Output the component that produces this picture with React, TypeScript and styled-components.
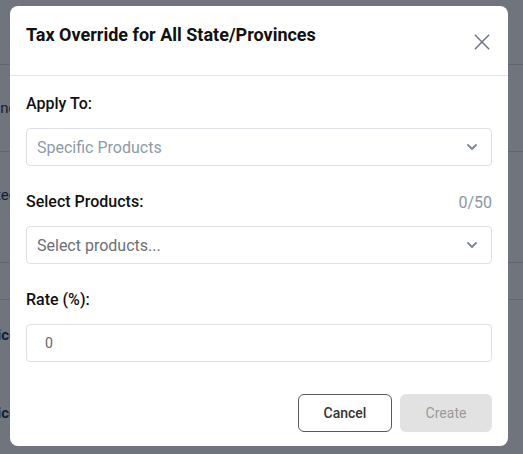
import * as React from "react";
import styled, { createGlobalStyle } from "styled-components";

const GlobalStyle = createGlobalStyle`
  html, body {
    margin: 0;
    padding: 0;
    background: #ffffff;
    font-family: Roboto, "Liberation Sans", Arial, sans-serif;
  }
  * { box-sizing: border-box; }
`;

const Page = styled.div`
  width: 523px;
  height: 454px;
  overflow: hidden;
  position: relative;
  background: #ffffff;
`;

const PageHeader = styled.div`
  height: 65px;
  border-bottom: 1px solid #d8dbe0;
`;

const PageRow = styled.div<{ $h: number; $lift?: number }>`
  height: ${(p) => p.$h}px;
  border-bottom: 1px solid #d8dbe0;
  display: flex;
  align-items: center;
  padding-bottom: ${(p) => p.$lift || 0}px;
  margin-left: -22px;
  font-size: 15px;
  color: #1f2937;
`;

const PageList = styled.div`
  display: flex;
  flex-direction: column;
  gap: 42px;
  padding: 26px 0 0 0;
  margin-left: -18px;
`;

const ListItem = styled.div`
  display: flex;
  flex-direction: column;
  gap: 4px;
`;

const ItemTitle = styled.div`
  font-size: 15px;
  font-weight: 700;
  color: #1f2937;
`;

const ItemSub = styled.div`
  font-size: 12px;
  color: #6b7280;
`;

const Overlay = styled.div`
  position: absolute;
  inset: 0;
  background: rgba(17, 24, 39, 0.6);
  padding: 6px 0 0 10px;
`;

const Dialog = styled.div`
  width: 498px;
  height: 440px;
  background: #ffffff;
  border-radius: 8px;
  display: flex;
  flex-direction: column;
`;

const Header = styled.div`
  height: 70px;
  border-bottom: 1px solid #e3e5e8;
  display: flex;
  align-items: flex-start;
  justify-content: space-between;
  padding: 17px 14px 0 16px;
`;

const Title = styled.h2`
  margin: 0;
  font-size: 18px;
  line-height: 24px;
  font-weight: 700;
  color: #111111;
`;

const CloseButton = styled.button`
  border: none;
  background: none;
  padding: 0;
  margin-top: 7px;
  width: 24px;
  height: 24px;
  display: flex;
  align-items: center;
  justify-content: center;
  color: #6b7682;
  cursor: pointer;
`;

const Body = styled.div`
  flex: 1;
  display: flex;
  flex-direction: column;
  padding: 18px 16px 14px 16px;
`;

const Field = styled.div`
  display: flex;
  flex-direction: column;
  gap: 14px;
  margin-bottom: 26px;
`;

const LabelRow = styled.div`
  display: flex;
  justify-content: space-between;
  align-items: center;
`;

const Label = styled.label`
  font-size: 16px;
  line-height: 20px;
  font-weight: 500;
  color: #111111;
`;

const Counter = styled.span`
  font-size: 16px;
  color: #8a97a3;
`;

const SelectBox = styled.div<{ $muted?: boolean }>`
  height: 38px;
  border: 1px solid #dcdfe3;
  border-radius: 4px;
  display: flex;
  align-items: center;
  justify-content: space-between;
  padding: 0 11px 0 10px;
  font-size: 16px;
  color: ${(p) => (p.$muted ? "#8c9ba7" : "#6b7078")};
`;

const Input = styled.input`
  height: 38px;
  border: 1px solid #dcdfe3;
  border-radius: 4px;
  padding: 0 18px;
  font-family: inherit;
  font-size: 14px;
  color: #5f6670;
  outline: none;
`;

const Footer = styled.div`
  margin-top: auto;
  display: flex;
  justify-content: flex-end;
  gap: 8px;
`;

const Button = styled.button<{ $primary?: boolean }>`
  height: 38px;
  width: ${(p) => (p.$primary ? "92px" : "94px")};
  border-radius: 6px;
  font-family: inherit;
  font-size: 14px;
  font-weight: ${(p) => (p.$primary ? 400 : 500)};
  border: ${(p) => (p.$primary ? "none" : "1px solid #555a60")};
  background: ${(p) => (p.$primary ? "#e2e2e2" : "#ffffff")};
  color: ${(p) => (p.$primary ? "#9a9a9a" : "#333333")};
  cursor: ${(p) => (p.$primary ? "default" : "pointer")};
`;

const Chevron = () => (
  <svg width="16" height="16" viewBox="0 0 24 24" fill="none" stroke="#7d8a96" strokeWidth="2.8" strokeLinecap="round" strokeLinejoin="round">
    <path d="M6 9l6 6 6-6" />
  </svg>
);

const App: React.FC = () => {
  return (
    <>
      <GlobalStyle />
      <Page>
        <PageHeader />
        <PageRow $h={87}>Brand</PageRow>
        <PageRow $h={111} $lift={24}>Categories</PageRow>
        <PageRow $h={37} />
        <PageList>
          <ListItem>
            <ItemTitle>Price</ItemTitle>
            <ItemSub>all</ItemSub>
          </ListItem>
          <ListItem>
            <ItemTitle>Price</ItemTitle>
            <ItemSub>all</ItemSub>
          </ListItem>
        </PageList>
        <Overlay>
          <Dialog>
            <Header>
              <Title>Tax Override for All State/Provinces</Title>
              <CloseButton aria-label="Close">
                <svg width="20" height="20" viewBox="0 0 24 24" fill="none" stroke="currentColor" strokeWidth="1.8" strokeLinecap="round">
                  <path d="M4 4l16 16M20 4L4 20" />
                </svg>
              </CloseButton>
            </Header>
            <Body>
              <Field>
                <Label>Apply To:</Label>
                <SelectBox $muted>
                  Specific Products
                  <Chevron />
                </SelectBox>
              </Field>
              <Field>
                <LabelRow>
                  <Label>Select Products:</Label>
                  <Counter>0/50</Counter>
                </LabelRow>
                <SelectBox>
                  Select products...
                  <Chevron />
                </SelectBox>
              </Field>
              <Field>
                <Label>Rate (%):</Label>
                <Input defaultValue="0" />
              </Field>
              <Footer>
                <Button>Cancel</Button>
                <Button $primary disabled>Create</Button>
              </Footer>
            </Body>
          </Dialog>
        </Overlay>
      </Page>
    </>
  );
};

export default App;
